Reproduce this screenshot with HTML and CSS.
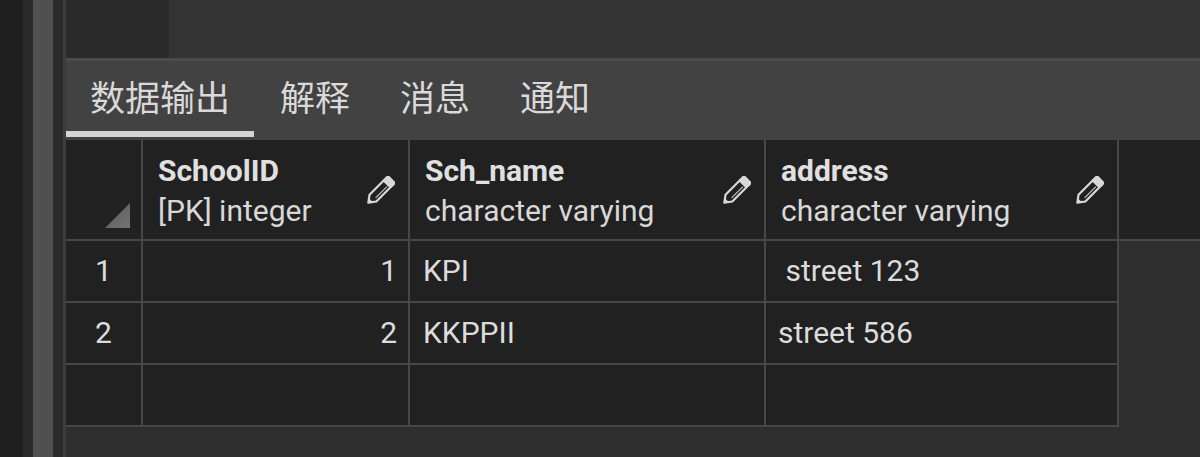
FILE: index.html
```html
<!DOCTYPE html>
<html lang="zh">
<head>
<meta charset="utf-8">
<title>数据输出</title>
<link rel="stylesheet" href="styles.css">
</head>
<body>
<div class="app">
  <div class="rail r1"></div>
  <div class="rail r2"></div>
  <div class="rail r3"></div>
  <div class="rail r4"></div>
  <div class="rail r5"></div>
  <div class="main">
    <div class="top">
      <div class="top-left"></div>
      <div class="top-right"></div>
    </div>
    <div class="tabs">
      <div class="tab active">数据输出</div>
      <div class="tab">解释</div>
      <div class="tab">消息</div>
      <div class="tab">通知</div>
    </div>
    <div class="grid-area">
      <div class="head">
        <div class="hcell corner"><span class="tri"></span></div>
        <div class="hcell col">
          <div class="col-text"><div class="col-name">SchoolID</div><div class="col-type">[PK] integer</div></div>
          <svg class="pencil" viewBox="0 0 30 30" width="30" height="30"><g transform="translate(15 15) rotate(-45)"><path d="M-16.5 0 L-10 -4.8 H10 V4.8 H-10 Z" fill="#212121" stroke="#d8d8d8" stroke-width="2.2" stroke-linejoin="round"/><path d="M10 -5.9 H14.2 a3 3 0 0 1 3 3 V2.9 a3 3 0 0 1 -3 3 H10 Z" fill="#d8d8d8"/><path d="M-17.4 0 L-13 -2.6 V2.6 Z" fill="#d8d8d8"/><path d="M-8 1.8 H8" stroke="#c4c4c4" stroke-width="1.2"/></g></svg>
        </div>
        <div class="hcell col">
          <div class="col-text"><div class="col-name">Sch_name</div><div class="col-type">character varying</div></div>
          <svg class="pencil" viewBox="0 0 30 30" width="30" height="30"><g transform="translate(15 15) rotate(-45)"><path d="M-16.5 0 L-10 -4.8 H10 V4.8 H-10 Z" fill="#212121" stroke="#d8d8d8" stroke-width="2.2" stroke-linejoin="round"/><path d="M10 -5.9 H14.2 a3 3 0 0 1 3 3 V2.9 a3 3 0 0 1 -3 3 H10 Z" fill="#d8d8d8"/><path d="M-17.4 0 L-13 -2.6 V2.6 Z" fill="#d8d8d8"/><path d="M-8 1.8 H8" stroke="#c4c4c4" stroke-width="1.2"/></g></svg>
        </div>
        <div class="hcell col">
          <div class="col-text"><div class="col-name">address</div><div class="col-type">character varying</div></div>
          <svg class="pencil" viewBox="0 0 30 30" width="30" height="30"><g transform="translate(15 15) rotate(-45)"><path d="M-16.5 0 L-10 -4.8 H10 V4.8 H-10 Z" fill="#212121" stroke="#d8d8d8" stroke-width="2.2" stroke-linejoin="round"/><path d="M10 -5.9 H14.2 a3 3 0 0 1 3 3 V2.9 a3 3 0 0 1 -3 3 H10 Z" fill="#d8d8d8"/><path d="M-17.4 0 L-13 -2.6 V2.6 Z" fill="#d8d8d8"/><path d="M-8 1.8 H8" stroke="#c4c4c4" stroke-width="1.2"/></g></svg>
        </div>
        <div class="hcell filler"></div>
      </div>
      <div class="body">
        <div class="cell rownum">1</div>
        <div class="cell num">1</div>
        <div class="cell text">KPI</div>
        <div class="cell text addr"> street 123</div>
        <div class="cell rownum">2</div>
        <div class="cell num">2</div>
        <div class="cell text">KKPPII</div>
        <div class="cell text addr">street 586</div>
        <div class="cell rownum"></div>
        <div class="cell num"></div>
        <div class="cell text"></div>
        <div class="cell text addr"></div>
      </div>
    </div>
  </div>
</div>
</body>
</html>
```

FILE: styles.css
```css
html, body {
  margin: 0;
  padding: 0;
  background: #1f1f1f;
}
body {
  font-family: Roboto, "Noto Sans CJK SC", sans-serif;
  color: #dcdcdc;
}
.app {
  display: flex;
  width: 1200px;
  height: 457px;
  overflow: hidden;
}
.rail { flex: none; }
.r1 { width: 23px; background: #1f1f1f; }
.r2 { width: 10px; background: #2a2a2a; }
.r3 { width: 20px; background: #505050; }
.r4 { width: 10px; background: #2b2b2b; }
.r5 { width: 3px; background: #3c3c3c; }
.main {
  flex: 1;
  display: flex;
  flex-direction: column;
  min-width: 0;
}
.top {
  height: 58px;
  display: flex;
  flex: none;
}
.top-left { width: 103px; background: #2a2a2a; }
.top-right { flex: 1; background: #333333; }
.tabs {
  flex: none;
  display: flex;
  gap: 2px;
  background: #424242;
  border-top: 3px solid #4b4b4b;
  padding-bottom: 3px;
}
.tab {
  height: 76px;
  box-sizing: border-box;
  padding: 0 24px;
  border-bottom: 6px solid transparent;
  font-family: "Noto Sans CJK SC", sans-serif;
  font-size: 35px;
  line-height: 70px;
  color: #d9d9d9;
}
.tab.active { border-bottom-color: #d4d4d4; }
.grid-area {
  flex: 1;
  background: #2e2e2e;
}
.head {
  display: grid;
  grid-template-columns: 75px 265px 354px 351px 1fr;
  column-gap: 2px;
  background: #474747;
  padding-bottom: 2px;
  height: 101px;
  box-sizing: border-box;
}
.hcell { background: #212121; }
.corner {
  display: flex;
  justify-content: flex-end;
  align-items: flex-end;
  padding: 0 11px 11px 0;
}
.tri {
  width: 25px;
  height: 25px;
  background: linear-gradient(135deg, #5a5a5a, #747474);
  clip-path: polygon(100% 0, 100% 100%, 0 100%);
}
.col {
  display: flex;
  align-items: center;
  justify-content: space-between;
  padding: 11px 13px 8px 15px;
}
.col-text {
  font-size: 30px;
  line-height: 40px;
  white-space: nowrap;
}
.col-name { font-weight: 700; color: #e0e0e0; }
.col-type { color: #d8d8d8; }
.pencil { flex: none; display: block; }
.body {
  display: grid;
  grid-template-columns: 75px 265px 354px 351px;
  grid-auto-rows: 60px;
  gap: 2px;
  background: #474747;
  padding: 0 2px 2px 0;
  width: max-content;
}
.cell {
  background: #212121;
  font-size: 30px;
  line-height: 60px;
  white-space: pre;
  color: #dcdcdc;
}
.rownum { text-align: center; }
.num { text-align: right; padding-right: 11px; }
.text { padding-left: 13px; }
.addr { padding-left: 12px; }
```
